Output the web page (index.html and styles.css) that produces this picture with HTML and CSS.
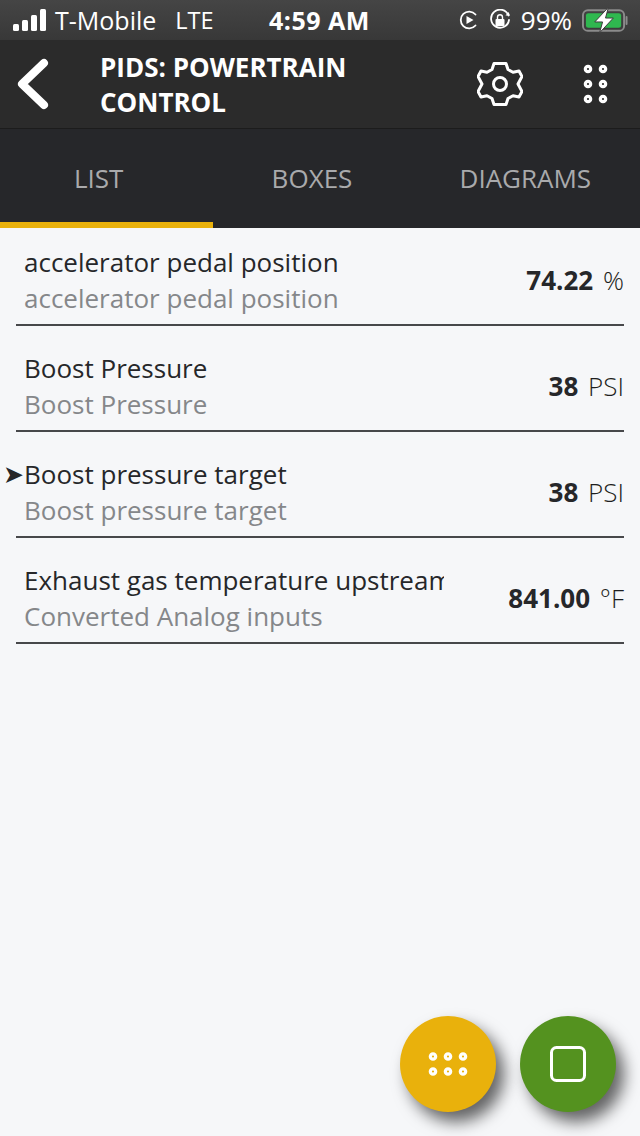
FILE: index.html
```html
<!DOCTYPE html>
<html lang="en">
<head>
    <meta charset="UTF-8">
    <meta name="viewport" content="width=device-width, initial-scale=1.0">
    <title>PIDs: Powertrain Control</title>
    <link rel="stylesheet" href="styles.css">
</head>
<body>
    <div class="status-bar">
        <div class="status-left">
            <svg class="signal" width="34" height="22" viewBox="0 0 34 22">
                <rect x="0" y="15" width="6" height="7" rx="1.5" fill="#fff"/>
                <rect x="9" y="11" width="6" height="11" rx="1.5" fill="#fff"/>
                <rect x="18" y="6" width="6" height="16" rx="1.5" fill="#fff"/>
                <rect x="27" y="0" width="6" height="22" rx="1.5" fill="#fff"/>
            </svg>
            <span class="carrier">T-Mobile</span>
            <span class="network">LTE</span>
        </div>
        <div class="status-time">4:59 AM</div>
        <div class="status-right">
            <svg width="20" height="20" viewBox="0 0 20 20" fill="none">
                <path d="M16.5 4.5A8.4 8.4 0 1 0 16.5 15.5" stroke="#fff" stroke-width="1.8" stroke-linecap="round"/>
                <path d="M7.5 6L14.5 10L7.5 14Z" fill="#fff"/>
            </svg>
            <svg width="22" height="22" viewBox="0 0 22 22" fill="none">
                <path d="M19.5 6.5A9 9 0 1 0 20 11" stroke="#fff" stroke-width="1.8" stroke-linecap="round"/>
                <path d="M16.5 6.5H21L19.5 3Z" fill="#fff"/>
                <rect x="6.5" y="10" width="9" height="7" rx="1" fill="#fff"/>
                <path d="M8.5 10V8.2a2.5 2.5 0 0 1 5 0V10" stroke="#fff" stroke-width="1.4"/>
            </svg>
            <span class="percent">99%</span>
            <svg class="battery" width="47" height="26" viewBox="0 0 48 26" fill="none">
                <rect x="1" y="3" width="42" height="21" rx="5" stroke="#8b8b8b" stroke-width="2"/>
                <rect x="4" y="6" width="36" height="15" rx="2.5" fill="#2fb84f"/>
                <path d="M45.5 10v7" stroke="#8b8b8b" stroke-width="2" stroke-linecap="round"/>
                <path d="M27 0L13 15H21L18 26L32 11H24Z" fill="#fff" stroke="#3a3a3a" stroke-width="1"/>
            </svg>
        </div>
    </div>

    <header class="top-bar">
        <svg class="back" width="34" height="52" viewBox="0 0 34 52" fill="none">
            <path d="M28 5L6 26L28 47" stroke="#fff" stroke-width="8" stroke-linecap="round" stroke-linejoin="round"/>
        </svg>
        <h1>PIDS: POWERTRAIN<br>CONTROL</h1>
        <svg class="gear" width="46" height="48" viewBox="0 0 46 48" fill="none">
            <path d="M17 3.5H29L31 9.5L36 12.3L42 11L45 16.5L41 24L45 31.5L42 37L36 35.7L31 38.5L29 44.5H17L15 38.5L10 35.7L4 37L1 31.5L5 24L1 16.5L4 11L10 12.3L15 9.5Z" stroke="#fff" stroke-width="3" stroke-linejoin="round"/>
            <circle cx="23" cy="24" r="6.5" stroke="#fff" stroke-width="3"/>
        </svg>
        <svg class="dots" width="26" height="40" viewBox="0 0 26 40" fill="none" stroke="#fff" stroke-width="3.2">
            <circle cx="5" cy="5" r="2.7"/><circle cx="20" cy="5" r="2.7"/>
            <circle cx="5" cy="20" r="2.7"/><circle cx="20" cy="20" r="2.7"/>
            <circle cx="5" cy="35" r="2.7"/><circle cx="20" cy="35" r="2.7"/>
        </svg>
    </header>

    <nav class="tabs">
        <div class="tab active">LIST</div>
        <div class="tab">BOXES</div>
        <div class="tab">DIAGRAMS</div>
    </nav>

    <main class="pid-list">
        <div class="pid-row">
            <div class="pid-names">
                <div class="pid-name">accelerator pedal position</div>
                <div class="pid-sub">accelerator pedal position</div>
            </div>
            <div class="pid-value"><b>74.22</b> %</div>
        </div>
        <div class="pid-row">
            <div class="pid-names">
                <div class="pid-name">Boost Pressure</div>
                <div class="pid-sub">Boost Pressure</div>
            </div>
            <div class="pid-value"><b>38</b> PSI</div>
        </div>
        <div class="pid-row">
            <span class="marker">➤</span>
            <div class="pid-names">
                <div class="pid-name">Boost pressure target</div>
                <div class="pid-sub">Boost pressure target</div>
            </div>
            <div class="pid-value"><b>38</b> PSI</div>
        </div>
        <div class="pid-row">
            <div class="pid-names">
                <div class="pid-name">Exhaust gas temperature upstream</div>
                <div class="pid-sub">Converted Analog inputs</div>
            </div>
            <div class="pid-value"><b>841.00</b> °F</div>
        </div>
    </main>

    <div class="fabs">
        <button class="fab fab-yellow">
            <svg width="40" height="26" viewBox="0 0 40 26" fill="none" stroke="#fff" stroke-width="3.2">
                <circle cx="5" cy="5.5" r="2.7"/><circle cx="20" cy="5.5" r="2.7"/><circle cx="35" cy="5.5" r="2.7"/>
                <circle cx="5" cy="20.5" r="2.7"/><circle cx="20" cy="20.5" r="2.7"/><circle cx="35" cy="20.5" r="2.7"/>
            </svg>
        </button>
        <button class="fab fab-green">
            <svg width="36" height="36" viewBox="0 0 36 36" fill="none">
                <rect x="1.5" y="1.5" width="33" height="33" rx="5" stroke="#fff" stroke-width="3"/>
            </svg>
        </button>
    </div>
</body>
</html>
```

FILE: styles.css
```css
:root {
    --text-color: #26272a;
    --sub-color: #85878a;
    --bg-color: #f6f7f9;
    --yellow: #e9b10c;
    --green: #54921f;
}

body {
    font-family: "Open Sans", sans-serif;
    background-color: var(--bg-color);
    color: var(--text-color);
    margin: 0;
    padding: 0;
    width: 640px;
    height: 1136px;
    position: relative;
    overflow: hidden;
}

.status-bar {
    height: 40px;
    background: linear-gradient(#454545, #383838);
    color: #fff;
    display: grid;
    grid-template-columns: 1fr auto 1fr;
    align-items: center;
    padding: 0 11px 0 13px;
    box-sizing: border-box;
    font-size: 25px;
}

.status-left {
    display: flex;
    align-items: center;
    gap: 8px;
}

.network {
    margin-left: 11px;
    font-size: 23.5px;
}

.status-time {
    font-weight: 700;
    font-size: 25px;
    letter-spacing: 0.5px;
    margin-left: -3px;
}

.status-right {
    display: flex;
    align-items: center;
    justify-content: flex-end;
    gap: 10px;
}

.percent {
    font-size: 26px;
}

.top-bar {
    height: 89px;
    background-color: #2b2b2b;
    border-bottom: 1px solid #1c1c1c;
    box-sizing: border-box;
    display: flex;
    align-items: center;
    padding-left: 16px;
}

.top-bar h1 {
    margin: 2px 0 0 50px;
    width: 377px;
    color: #fff;
    font-size: 26px;
    line-height: 35px;
    font-weight: 700;
}

.dots {
    margin-left: 60px;
}

.tabs {
    height: 99px;
    background-color: #26272a;
    display: grid;
    grid-template-columns: repeat(3, 1fr);
}

.tab {
    display: flex;
    align-items: center;
    justify-content: center;
    padding: 0 16px 2px 0;
    color: #a9aaac;
    font-size: 26px;
    box-sizing: border-box;
}

.tab.active {
    border-bottom: 6px solid var(--yellow);
    padding-bottom: 0;
    padding-top: 4px;
}

.pid-list {
    padding: 0 16px;
    display: flex;
    flex-direction: column;
    gap: 8px;
}

.pid-row {
    height: 98px;
    padding: 16px 0 8px;
    box-sizing: border-box;
    border-bottom: 2px solid #47484b;
    display: flex;
    align-items: center;
    justify-content: space-between;
    position: relative;
}

.pid-names {
    padding-left: 8px;
    width: 428px;
    box-sizing: border-box;
    overflow: hidden;
    white-space: nowrap;
}

.pid-name {
    font-size: 26px;
    line-height: 36px;
}

.pid-sub {
    font-size: 26px;
    line-height: 36px;
    color: var(--sub-color);
}

.pid-value {
    font-size: 26px;
    font-weight: 300;
    color: #1d1e20;
    white-space: nowrap;
}

.pid-value b {
    font-weight: 700;
    color: var(--text-color);
    margin-right: 3px;
}

.marker {
    position: absolute;
    left: -13px;
    top: 17px;
    font-family: "DejaVu Sans", sans-serif;
    font-size: 25px;
    line-height: 36px;
}

.fabs {
    position: absolute;
    right: 24px;
    bottom: 24px;
    display: flex;
    gap: 24px;
}

.fab {
    width: 96px;
    height: 96px;
    border: none;
    border-radius: 50%;
    padding: 0;
    display: flex;
    align-items: center;
    justify-content: center;
    box-shadow: 8px 10px 16px rgba(0, 0, 0, 0.6);
}

.fab-yellow {
    background-color: var(--yellow);
}

.fab-green {
    background-color: var(--green);
}
```
